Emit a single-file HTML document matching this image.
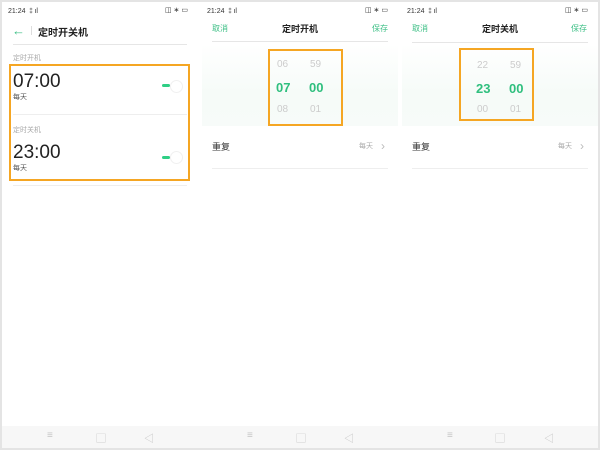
<!DOCTYPE html>
<html><head><meta charset="utf-8"><style>
*{margin:0;padding:0;box-sizing:border-box}
body{width:600px;height:450px;overflow:hidden;background:#fff;font-family:"Liberation Sans","Noto Sans CJK SC",sans-serif;position:relative}
.a{position:absolute;white-space:nowrap}
.frame{position:absolute;left:0;top:0;width:600px;height:450px;border:2px solid #e4e4e4}
.st{font-size:7px;color:#333}
.line{position:absolute;height:1px;background:#e6e6e6}
.ob{position:absolute;border:2px solid #f5a623}
.g{color:#3cbf85}
.nav{position:absolute;top:426px;height:22px;background:#f7f7f7}
.ic{position:absolute;color:#c4c4c4;font-size:10px;top:430px}
.grad{position:absolute;top:44px;height:82px;background:linear-gradient(#fff,#f6fbf8 60%,#f7fbf9)}
.pk{font-size:10px;color:#ccc}
.pb{font-size:13px;font-weight:bold;color:#2fbf7e}
</style></head><body>
<!-- panel 1 -->
<div class="a st" style="left:8px;top:6px">21:24 ⁑ıl</div>
<div class="a st" style="left:165px;top:6px">◫ ∗ ▭</div>
<div class="a g" style="left:12px;top:23px;font-size:13px;font-weight:bold">←</div>
<div class="a" style="left:31px;top:26px;width:1px;height:9px;background:#ddd"></div>
<div class="a" style="left:38px;top:24px;font-size:10px;font-weight:bold;color:#222">定时开关机</div>
<div class="line" style="left:13px;top:44px;width:174px"></div>
<div class="a" style="left:13px;top:53px;font-size:7px;color:#aaa">定时开机</div>
<div class="ob" style="left:9px;top:64px;width:181px;height:117px"></div>
<div class="a" style="left:13px;top:71px;font-size:19px;color:#222">07:00</div>
<div class="a" style="left:13px;top:92px;font-size:7px;color:#555">每天</div>
<div class="a" style="left:162px;top:84px;width:8px;height:3px;border-radius:2px;background:#2fcf85"></div>
<div class="a" style="left:170px;top:80px;width:13px;height:13px;border-radius:50%;border:1px solid #f0f0f0"></div>
<div class="line" style="left:13px;top:114px;width:174px;background:#eee"></div>
<div class="a" style="left:13px;top:125px;font-size:7px;color:#aaa">定时关机</div>
<div class="a" style="left:13px;top:142px;font-size:19px;color:#222">23:00</div>
<div class="a" style="left:13px;top:163px;font-size:7px;color:#555">每天</div>
<div class="a" style="left:162px;top:156px;width:8px;height:3px;border-radius:2px;background:#2fcf85"></div>
<div class="a" style="left:170px;top:151px;width:13px;height:13px;border-radius:50%;border:1px solid #f0f0f0"></div>
<div class="line" style="left:13px;top:185px;width:174px;background:#eee"></div>

<!-- panel 2 -->
<div class="a st" style="left:207px;top:6px">21:24 ⁑ıl</div>
<div class="a st" style="left:365px;top:6px">◫ ∗ ▭</div>
<div class="grad" style="left:202px;width:196px"></div>
<div class="a g" style="left:212px;top:23px;font-size:8px">取消</div>
<div class="a" style="left:282px;top:22px;font-size:9px;font-weight:bold;color:#222">定时开机</div>
<div class="a g" style="left:372px;top:23px;font-size:8px">保存</div>
<div class="line" style="left:212px;top:41px;width:176px"></div>
<div class="ob" style="left:268px;top:49px;width:75px;height:77px"></div>
<div class="a pk" style="left:277px;top:59px">06</div><div class="a pk" style="left:310px;top:59px">59</div>
<div class="a pb" style="left:276px;top:80px">07</div><div class="a pb" style="left:309px;top:80px">00</div>
<div class="a pk" style="left:277px;top:104px">08</div><div class="a pk" style="left:310px;top:104px">01</div>
<div class="a" style="left:212px;top:140px;font-size:9px;color:#333">重复</div>
<div class="a" style="left:359px;top:141px;font-size:7px;color:#aaa">每天</div>
<div class="a" style="left:381px;top:139px;font-size:12px;color:#bbb">›</div>
<div class="line" style="left:212px;top:168px;width:176px;background:#eee"></div>

<!-- panel 3 -->
<div class="a st" style="left:407px;top:6px">21:24 ⁑ıl</div>
<div class="a st" style="left:565px;top:6px">◫ ∗ ▭</div>
<div class="grad" style="left:402px;width:196px"></div>
<div class="a g" style="left:412px;top:23px;font-size:8px">取消</div>
<div class="a" style="left:482px;top:22px;font-size:9px;font-weight:bold;color:#222">定时关机</div>
<div class="a g" style="left:571px;top:23px;font-size:8px">保存</div>
<div class="line" style="left:412px;top:42px;width:176px"></div>
<div class="ob" style="left:459px;top:48px;width:75px;height:73px"></div>
<div class="a pk" style="left:477px;top:60px">22</div><div class="a pk" style="left:510px;top:60px">59</div>
<div class="a pb" style="left:476px;top:81px">23</div><div class="a pb" style="left:509px;top:81px">00</div>
<div class="a pk" style="left:477px;top:104px">00</div><div class="a pk" style="left:510px;top:104px">01</div>
<div class="a" style="left:412px;top:140px;font-size:9px;color:#333">重复</div>
<div class="a" style="left:558px;top:141px;font-size:7px;color:#aaa">每天</div>
<div class="a" style="left:580px;top:139px;font-size:12px;color:#bbb">›</div>
<div class="line" style="left:412px;top:168px;width:176px;background:#eee"></div>

<!-- nav -->
<div class="nav" style="left:2px;width:596px"></div>
<div class="ic" style="left:47px">≡</div><div class="ic" style="left:96px">▢</div><div class="ic" style="left:144px">◁</div>
<div class="ic" style="left:247px">≡</div><div class="ic" style="left:296px">▢</div><div class="ic" style="left:344px">◁</div>
<div class="ic" style="left:447px">≡</div><div class="ic" style="left:495px">▢</div><div class="ic" style="left:544px">◁</div>
<div class="frame"></div>
</body></html>
